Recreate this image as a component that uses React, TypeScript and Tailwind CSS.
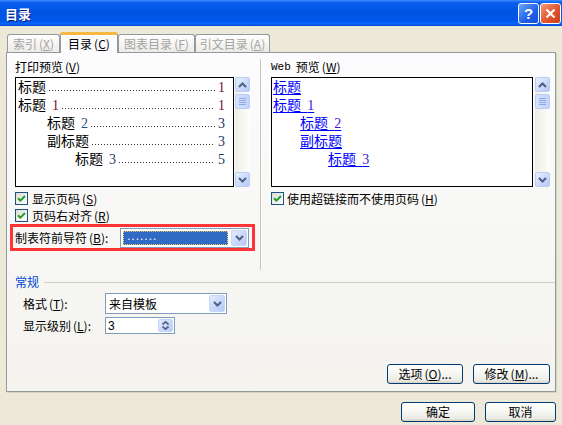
import React from "react";

const Mn = ({ k }: { k: string }) => (
  <span className="ml-[2px]">
    (<span className="underline underline-offset-[1px]">{k}</span>)
  </span>
);

function Chevron({ dir, color = "#4d6185" }: { dir: "up" | "down"; color?: string }) {
  return (
    <svg width="9" height="6" viewBox="0 0 9 6">
      <path
        d={dir === "up" ? "M1 5L4.5 1.5L8 5" : "M1 1L4.5 4.5L8 1"}
        fill="none"
        stroke={color}
        strokeWidth="2"
      />
    </svg>
  );
}

function ScrollButton({ dir }: { dir: "up" | "down" }) {
  return (
    <div className="flex h-[15px] w-[15px] items-center justify-center rounded-[2px] border border-[#bccdf4] bg-[linear-gradient(135deg,#eaf0fe_0%,#c9d8fb_60%,#b4c8f7_100%)]">
      <Chevron dir={dir} />
    </div>
  );
}

function Scrollbar() {
  return (
    <div className="flex h-full w-[15px] flex-col bg-[linear-gradient(90deg,#eeede5_0%,#fefefb_100%)]">
      <ScrollButton dir="up" />
      <div className="mt-[2px] flex h-[15px] w-[15px] flex-col items-center justify-center gap-[1px] rounded-[2px] border border-[#bccdf4] bg-[linear-gradient(90deg,#d6e2fd,#c2d3fb)]">
        {[0, 1, 2, 3].map((i) => (
          <div key={i} className="h-px w-[7px] bg-[#8ea8e8]" />
        ))}
      </div>
      <div className="flex-1" />
      <ScrollButton dir="down" />
    </div>
  );
}

function Check() {
  return (
    <div className="flex h-[13px] w-[13px] shrink-0 items-center justify-center border border-[#1c5180] bg-[linear-gradient(135deg,#dcdcd7,#ffffff)]">
      <svg width="9" height="9" viewBox="0 0 9 9">
        <path d="M1 4.2L3.4 6.6L8 2" fill="none" stroke="#21a121" strokeWidth="2" />
      </svg>
    </div>
  );
}

function ComboButton() {
  return (
    <div className="m-px flex w-[16px] items-center justify-center self-stretch rounded-[2px] border border-[#c6d5fb] bg-[linear-gradient(135deg,#e2eafe,#b6c9f6)]">
      <Chevron dir="down" />
    </div>
  );
}

function XpButton({ children, className }: { children: React.ReactNode; className: string }) {
  return (
    <div
      className={`flex h-[20px] items-center justify-center rounded-[3px] border border-[#003c74] bg-[linear-gradient(180deg,#ffffff_0%,#f5f5f1_50%,#ecebe6_85%,#d6d0c5_100%)] leading-none ${className}`}
    >
      {children}
    </div>
  );
}

const printLines = [
  { pl: "pl-[2px]", label: "标题", num: "", page: "1", numColor: "text-[#7a1030]", pageColor: "text-[#7a1030]" },
  { pl: "pl-[2px]", label: "标题", num: "1", page: "1", numColor: "text-[#7a1030]", pageColor: "text-[#7a1030]" },
  { pl: "pl-[31px]", label: "标题", num: "2", page: "3", numColor: "text-[#2a4f86]", pageColor: "text-[#22355e]" },
  { pl: "pl-[31px]", label: "副标题", num: "", page: "3", numColor: "", pageColor: "text-[#22355e]" },
  { pl: "pl-[59px]", label: "标题", num: "3", page: "5", numColor: "text-[#2a3f6e]", pageColor: "text-[#22355e]" },
];

const webLines = [
  { pl: "pl-[1px]", label: "标题", num: "" },
  { pl: "pl-[1px]", label: "标题", num: "1" },
  { pl: "pl-[28px]", label: "标题", num: "2" },
  { pl: "pl-[28px]", label: "副标题", num: "" },
  { pl: "pl-[56px]", label: "标题", num: "3" },
];

const tabs = [
  { label: "索引", k: "X", w: "w-[53px]" },
  { label: "目录", k: "C", w: "w-[58px]", active: true },
  { label: "图表目录", k: "F", w: "w-[77px]" },
  { label: "引文目录", k: "A", w: "w-[75px]" },
];

export default function App() {
  return (
    <div className="h-[425px] w-[562px] overflow-hidden bg-[#ece9d8] font-['Noto_Sans_CJK_SC',sans-serif] text-[12px] leading-none text-black">
      {/* title bar */}
      <div className="flex h-[26px] items-center justify-between bg-[linear-gradient(180deg,#3d8bff_0%,#0a5ff0_10%,#0054e3_45%,#0057ea_80%,#0a66ff_92%,#0046c8_100%)] pl-[5px] pr-[1px]">
        <span className="text-[13px] font-bold text-white [text-shadow:1px_1px_#0a1a70]">目录</span>
        <div className="flex gap-[1px]">
          <div className="flex h-[21px] w-[21px] items-center justify-center rounded-[3px] border border-white bg-[linear-gradient(135deg,#6aa6ff,#1f5fe8_60%,#1450d8)] font-['Liberation_Sans',sans-serif] text-[15px] font-bold text-white">
            ?
          </div>
          <div className="flex h-[21px] w-[21px] items-center justify-center rounded-[3px] border border-white bg-[linear-gradient(135deg,#f29a78,#e0542f_55%,#c8401b)]">
            <svg width="11" height="11" viewBox="0 0 11 11">
              <path d="M1.5 1.5L9.5 9.5M9.5 1.5L1.5 9.5" stroke="#fff" strokeWidth="2.2" />
            </svg>
          </div>
        </div>
      </div>

      {/* tabs */}
      <div className="mt-[6px] flex h-[20px] items-end pl-[7px]">
        {tabs.map((t) =>
          t.active ? (
            <div
              key={t.label}
              className={`relative z-10 -mb-px flex h-[21px] items-center justify-center rounded-t-[3px] border-x border-t-[3px] border-x-[#919b9c] border-t-[#f9b640] bg-[#fcfcfe] ${t.w}`}
            >
              <span>
                {t.label}
                <Mn k={t.k} />
              </span>
            </div>
          ) : (
            <div
              key={t.label}
              className={`flex h-[18px] items-center justify-center rounded-t-[3px] border border-b-0 border-[#919b9c] bg-[linear-gradient(180deg,#ffffff,#ecebe6)] text-[#a3a3a3] ${t.w}`}
            >
              <span>
                {t.label}
                <Mn k={t.k} />
              </span>
            </div>
          )
        )}
      </div>

      {/* panel */}
      <div className="ml-[6px] flex h-[340px] w-[550px] flex-col border border-[#919b9c] bg-[linear-gradient(180deg,#fcfcfe_0%,#f4f3ee_100%)] shadow-[1px_1px_0_#d5d2c6]">
        <div className="flex h-[219px] pt-[6px]">
          {/* print preview */}
          <div className="ml-[8px] flex w-[240px] flex-col">
            <div className="flex h-[16px] items-center">
              打印预览
              <Mn k="V" />
            </div>
            <div className="mt-[2px] flex h-[110px]">
              <div className="h-[110px] w-[219px] border border-black bg-white">
                {printLines.map((l, i) => (
                  <div key={i} className={`flex h-[18px] items-baseline pr-[8px] text-[14px] leading-[16px] ${l.pl}`}>
                    <span>{l.label}</span>
                    {l.num && (
                      <span className={`ml-[6px] font-['Liberation_Serif',serif] ${l.numColor}`}>{l.num}</span>
                    )}
                    <div className="mx-[3px] mb-[5px] h-[1.5px] flex-1 self-end bg-[linear-gradient(90deg,#333_1px,transparent_1px)] bg-[length:3px_1.5px] bg-repeat-x" />
                    <span className={`font-['Liberation_Serif',serif] ${l.pageColor}`}>{l.page}</span>
                  </div>
                ))}
              </div>
              <div className="ml-px h-[110px]">
                <Scrollbar />
              </div>
            </div>
            <div className="mt-[3px] flex h-[17px] items-center gap-[4px]">
              <Check />
              <span>
                显示页码
                <Mn k="S" />
              </span>
            </div>
            <div className="flex h-[17px] items-center gap-[4px]">
              <Check />
              <span>
                页码右对齐
                <Mn k="R" />
              </span>
            </div>
            <div className="-ml-[5px] flex h-[27px] w-[245px] items-center border-[3px] border-[#ff3434] pl-[2px] pr-[3px]">
              <span className="w-[105px]">
                制表符前导符
                <Mn k="B" />:
              </span>
              <div className="flex h-[20px] w-[129px] border border-[#7f9db9] bg-white">
                <div className="m-[2px] flex flex-1 items-center border border-dotted border-[#f7c95c] bg-[#316ac5] pl-[3px] font-['Liberation_Sans',sans-serif] text-[12px] tracking-[1px] text-white">
                  <span className="-mt-[4px]">.......</span>
                </div>
                <ComboButton />
              </div>
            </div>
          </div>

          {/* separator */}
          <div className="mb-[2px] ml-[5px] flex">
            <div className="w-px bg-[#c9c6b6]" />
            <div className="w-px bg-white" />
          </div>

          {/* web preview */}
          <div className="ml-[9px] flex w-[279px] flex-col">
            <div className="flex h-[16px] items-center">
              <span className="font-['Liberation_Mono',monospace] text-[11px]">Web</span>
              <span className="ml-[5px]">预览</span>
              <Mn k="W" />
            </div>
            <div className="mt-[2px] flex h-[110px]">
              <div className="h-[110px] w-[262px] border border-black bg-white">
                {webLines.map((l, i) => (
                  <div key={i} className={`flex h-[18px] items-baseline text-[14px] leading-[16px] ${l.pl}`}>
                    <span className="whitespace-pre text-[#0000ff] underline underline-offset-[2px]">
                      {l.label}
                      {l.num && (
                        <>
                          {"  "}
                          <span className="font-['Liberation_Serif',serif] text-[#3a1ad8]">{l.num}</span>
                        </>
                      )}
                    </span>
                  </div>
                ))}
              </div>
              <div className="ml-[2px] h-[110px]">
                <Scrollbar />
              </div>
            </div>
            <div className="mt-[3px] flex h-[17px] items-center gap-[3px]">
              <Check />
              <span>
                使用超链接而不使用页码
                <Mn k="H" />
              </span>
            </div>
          </div>
        </div>

        {/* general group */}
        <div className="mt-[3px] flex h-[14px] items-center pl-[8px]">
          <span className="text-[#0046d5]">常规</span>
          <div className="ml-[5px] h-px flex-1 bg-[#d0d0bf]" />
        </div>
        <div className="mt-[4px] flex h-[21px] items-center pl-[16px]">
          <span className="w-[82px]">
            格式
            <Mn k="T" />:
          </span>
          <div className="flex h-[21px] w-[122px] border border-[#7f9db9] bg-white">
            <span className="flex flex-1 items-center pl-[3px] text-[12px]">来自模板</span>
            <ComboButton />
          </div>
        </div>
        <div className="mt-[3px] flex h-[17px] items-center pl-[16px]">
          <span className="w-[82px]">
            显示级别
            <Mn k="L" />:
          </span>
          <div className="flex h-[17px] w-[70px] border border-[#7f9db9] bg-white">
            <span className="flex flex-1 items-center pl-[2px] font-['Liberation_Sans',sans-serif]">3</span>
            <div className="m-px flex w-[15px] flex-col items-center justify-center gap-[1px] rounded-[2px] border border-[#c6d5fb] bg-[linear-gradient(135deg,#e2eafe,#b6c9f6)]">
              <svg width="7" height="4" viewBox="0 0 7 4">
                <path d="M0.5 3.5L3.5 0.8L6.5 3.5" fill="none" stroke="#4d6185" strokeWidth="1.6" />
              </svg>
              <svg width="7" height="4" viewBox="0 0 7 4">
                <path d="M0.5 0.5L3.5 3.2L6.5 0.5" fill="none" stroke="#4d6185" strokeWidth="1.6" />
              </svg>
            </div>
          </div>
        </div>
        <div className="mt-[30px] flex justify-end gap-[10px] pr-[5px]">
          <XpButton className="w-[76px]">
            选项
            <Mn k="O" />
            ...
          </XpButton>
          <XpButton className="w-[77px]">
            修改
            <Mn k="M" />
            ...
          </XpButton>
        </div>
      </div>

      {/* dialog buttons */}
      <div className="mt-[10px] flex justify-end gap-[10px] pr-[6px]">
        <XpButton className="w-[74px]">确定</XpButton>
        <XpButton className="w-[71px]">取消</XpButton>
      </div>
    </div>
  );
}
